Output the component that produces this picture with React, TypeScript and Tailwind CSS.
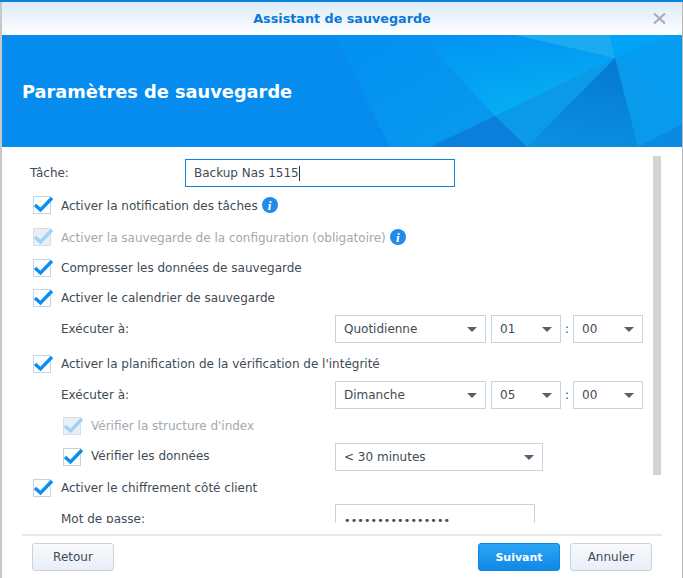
import type { ReactNode } from "react";

const FONT = "font-['DejaVu_Sans','Liberation_Sans',sans-serif]";

function InfoIcon() {
  return (
    <span className="ml-[4px] flex h-[16px] w-[16px] items-center justify-center rounded-full bg-[#1f8ceb] font-['Liberation_Serif',serif] text-[13px] font-bold italic leading-none text-white">
      i
    </span>
  );
}

function Check({ disabled = false }: { disabled?: boolean }) {
  return (
    <span
      className={`relative block h-[18px] w-[18px] shrink-0 border-[1.5px] ${
        disabled ? "border-[#d5dfe9] bg-[#e9eff5]" : "border-[#c6d4e2] bg-white"
      }`}
    >
      <svg
        className="absolute left-[-2px] top-[-2px] overflow-visible"
        width="22"
        height="22"
        viewBox="0 0 22 22"
      >
        <path
          d="M3 10 L8.5 15 L20 3"
          fill="none"
          stroke={disabled ? "#9fd2f6" : "#0a8ef0"}
          strokeWidth="3.4"
        />
      </svg>
    </span>
  );
}

function CheckRow({
  label,
  disabled = false,
  info = false,
  className = "",
  labelClass = "",
}: {
  label: string;
  disabled?: boolean;
  info?: boolean;
  className?: string;
  labelClass?: string;
}) {
  return (
    <div className={`flex h-[18px] items-center ${className}`}>
      <Check disabled={disabled} />
      <span className={`ml-[10px] ${disabled ? "text-[#a3a8ae]" : ""} ${labelClass}`}>{label}</span>
      {info && <InfoIcon />}
    </div>
  );
}

function Select({ value, className = "" }: { value: string; className?: string }) {
  return (
    <div
      className={`flex h-[28px] shrink-0 items-center justify-between border border-[#c6d4e2] pl-[8px] pr-[8px] ${className}`}
    >
      <span>{value}</span>
      <svg width="10" height="5" viewBox="0 0 10 5">
        <path d="M0 0 H10 L5 5 Z" fill="#56606b" />
      </svg>
    </div>
  );
}

function TimeRow({ day, hour, className = "" }: { day: string; hour: string; className?: string }) {
  return (
    <div className={`flex h-[28px] items-center pl-[28px] ${className}`}>
      <span className="w-[274px] shrink-0">Exécuter à:</span>
      <Select value={day} className="w-[151px]" />
      <Select value={hour} className="ml-[5px] w-[70px]" />
      <span className="w-[12px] text-center">:</span>
      <Select value="00" className="w-[70px]" />
    </div>
  );
}

function Button({ children, className = "" }: { children: ReactNode; className?: string }) {
  return (
    <button
      className={`h-[28px] w-[82px] rounded-[3px] border border-[#c6d4e2] bg-gradient-to-b from-[#f8fafc] to-[#e8eff6] text-center ${className}`}
    >
      {children}
    </button>
  );
}

export default function App() {
  return (
    <div className={`h-[578px] w-[683px] overflow-hidden bg-white text-[12px] leading-none text-[#414b55] ${FONT}`}>
      <div className="h-[2px] bg-[#0a84dc]" />
      <div className="flex h-[576px] border-l-2 border-r border-l-[#c8c8c8] border-r-[#b8b8b8]">
        <div className="flex w-[680px] flex-col">
          <div className="relative flex h-[33px] items-center justify-center bg-gradient-to-b from-[#dcebf8] to-white pt-[2px]">
            <span className="text-[12.75px] font-bold text-[#0a78d8]">Assistant de sauvegarde</span>
            <svg className="absolute right-[16px] top-[11px]" width="13" height="11" viewBox="0 0 13 11">
              <path d="M1 0.5 L12 10.5 M12 0.5 L1 10.5" stroke="#a9adb3" strokeWidth="2.2" />
            </svg>
          </div>

          <div className="relative flex h-[112px] items-center bg-[#058cee] pl-[20px] pt-[2px]">
            <svg className="absolute inset-0" width="680" height="112" viewBox="2 35 680 112">
              <defs>
                <linearGradient id="cyan" x1="0.2" y1="0" x2="0.55" y2="1">
                  <stop offset="0" stopColor="#0294f4" />
                  <stop offset="1" stopColor="#06b0f2" />
                </linearGradient>
                <linearGradient id="base" x1="0" y1="0" x2="1" y2="0.5">
                  <stop offset="0" stopColor="#0290f2" />
                  <stop offset="1" stopColor="#0a9cec" />
                </linearGradient>
                <linearGradient id="dark" x1="0.7" y1="0" x2="0.5" y2="1">
                  <stop offset="0" stopColor="#0578d2" />
                  <stop offset="1" stopColor="#0a8fe2" />
                </linearGradient>
              </defs>
              <polygon points="335,35 682,35 682,147 390,147" fill="url(#base)" />
              <polygon points="420,35 515,35 615,58 495,116" fill="url(#cyan)" />
              <polygon points="515,35 610,35 615,58" fill="#1cabf0" />
              <polygon points="610,35 667,35 615,58" fill="#00a5f8" />
              <polygon points="667,35 682,35 682,124 615,58" fill="#069cf0" />
              <polygon points="615,58 682,124 638,147" fill="#0a9aec" />
              <polygon points="682,124 682,147 638,147" fill="#0a8ae0" />
              <polygon points="615,58 638,147 527,147" fill="url(#dark)" />
              <polygon points="495,116 615,58 527,147" fill="#0a9ae8" />
              <polygon points="495,116 527,147 430,147" fill="#0a80dc" />
            </svg>
            <h1 className="relative text-[17.8px] font-bold text-white">Paramètres de sauvegarde</h1>
          </div>

          <div className="flex h-[376px] shrink-0">
            <div className="w-[651px] shrink-0 overflow-hidden pl-[31px] pt-[12px]">
              <div className="flex h-[28px] items-center">
                <span className="ml-[-3px] w-[155px] shrink-0">Tâche:</span>
                <div className="flex h-[28px] w-[270px] items-center border border-[#0a84dc] pl-[8px]">
                  Backup Nas 1515
                  <span className="h-[15px] w-px bg-[#333]" />
                </div>
              </div>
              <CheckRow label="Activer la notification des tâches" info className="mt-[9px]" labelClass="pt-[2px]" />
              <CheckRow label="Activer la sauvegarde de la configuration (obligatoire)" disabled info className="mt-[14px]" labelClass="pt-[2px]" />
              <CheckRow label="Compresser les données de sauvegarde" className="mt-[13px]" />
              <CheckRow label="Activer le calendrier de sauvegarde" className="mt-[12px]" />
              <TimeRow day="Quotidienne" hour="01" className="mt-[8px]" />
              <CheckRow label="Activer la planification de la vérification de l'intégrité" className="mt-[12px]" />
              <TimeRow day="Dimanche" hour="05" className="mt-[8px]" />
              <CheckRow label="Vérifier la structure d'index" disabled className="ml-[30px] mt-[8px]" />
              <div className="mt-[8px] flex h-[28px] items-center pl-[30px]">
                <Check />
                <span className="mb-[2px] ml-[10px] w-[244px] shrink-0">Vérifier les données</span>
                <Select value="< 30 minutes" className="w-[208px]" />
              </div>
              <CheckRow label="Activer le chiffrement côté client" className="mt-[8px]" />
              <div className="mt-[7px] flex h-[28px] items-center pl-[28px]">
                <span className="w-[274px] shrink-0 pt-[2px]">Mot de passe:</span>
                <div className="flex h-[28px] w-[200px] items-center border border-[#c6d4e2] pl-[8px] pt-[5px] text-[11px] tracking-[0.15px]">
                  ••••••••••••••••
                </div>
              </div>
            </div>
            <div className="mt-[9px] h-[319px] w-[8px] bg-[#d4d4d4]" />
          </div>

          <div className="mx-[20px] mt-[11px] flex h-[44px] items-start justify-between border-t-2 border-[#e8e8e8] px-[10px] pt-[7px]">
            <Button>Retour</Button>
            <div className="flex gap-[10px]">
              <button className="h-[28px] w-[82px] rounded-[3px] border border-[#0b86dc] bg-gradient-to-b from-[#2aa5f5] to-[#0f88e6] text-[11px] font-bold text-white">
                Suivant
              </button>
              <Button>Annuler</Button>
            </div>
          </div>
        </div>
      </div>
    </div>
  );
}
